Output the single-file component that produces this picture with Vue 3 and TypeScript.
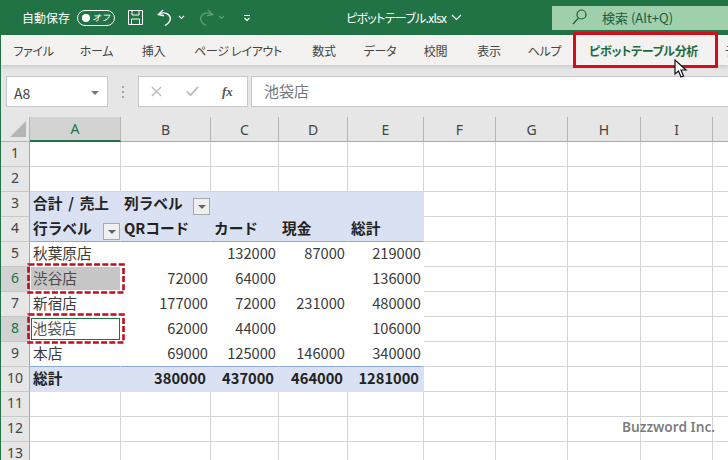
<script setup lang="ts">
const tabs = ['ファイル', 'ホーム', '挿入', 'ページ レイアウト', '数式', 'データ', '校閲', '表示', 'ヘルプ', 'ピボットテーブル分析', 'デザイン']
const cols = ['A', 'B', 'C', 'D', 'E', 'F', 'G', 'H', 'I', 'J']
const rowNums = Array.from({ length: 14 }, (_, i) => i + 1)

const data: Record<number, string[]> = {
  3: ['合計 / 売上', '列ラベル'],
  4: ['行ラベル', 'QRコード', 'カード', '現金', '総計'],
  5: ['秋葉原店', '', '132000', '87000', '219000'],
  6: ['渋谷店', '72000', '64000', '', '136000'],
  7: ['新宿店', '177000', '72000', '231000', '480000'],
  8: ['池袋店', '62000', '44000', '', '106000'],
  9: ['本店', '69000', '125000', '146000', '340000'],
  10: ['総計', '380000', '437000', '464000', '1281000'],
}

function text(r: number, c: number): string {
  return data[r]?.[c] ?? ''
}

function cellClass(r: number, c: number): Record<string, boolean> {
  const inPivot = r >= 3 && r <= 10 && c <= 4
  return {
    cell: true,
    pivot: inPivot,
    band: inPivot && (r === 3 || r === 4 || r === 10),
    bold: inPivot && (r === 3 || r === 4 || r === 10),
    lineb: inPivot && r === 4,
    lineb9: inPivot && r === 9,
    num: r >= 5 && r <= 10 && c >= 1 && c <= 4,
    total: r === 10 && c >= 1 && c <= 4,
    selected: r === 6 && c === 0,
    active: r === 8 && c === 0,
  }
}
</script>

<template>
  <div class="app">
    <header class="titlebar">
      <span class="autosave">自動保存</span>
      <span class="toggle"><i class="knob"></i><b>オフ</b></span>
      <svg class="save" width="17" height="17" viewBox="0 0 17 17" fill="none" stroke="#fff" stroke-width="1">
        <path d="M1.500 1.500h14v14h-14z" />
        <path d="M5 1.500v4.500h7v-4.500M4.500 15.500v-5.500h8v5.500" />
      </svg>
      <svg class="undo" width="16" height="17" viewBox="0 0 16 17" fill="none" stroke="#fff" stroke-width="1.400">
        <path d="M6 1L1.500 5.500L7 6.800" />
        <path d="M1.500 5.500c2.500-1.600 5.500-2 8-1 3.600 1.500 4.800 5 3 8-1 1.600-2.600 3-4.500 4" />
      </svg>
      <svg class="chev" width="7" height="5" viewBox="0 0 7 5" fill="none" stroke="#fff" stroke-width="1.200"><path d="M1 1l2.500 2.500L6 1" /></svg>
      <svg class="redo" width="16" height="17" viewBox="0 0 16 17" fill="none" stroke="#5f9d7c" stroke-width="1.400">
        <path d="M10 1L14.500 5.500L9 6.800" />
        <path d="M14.500 5.500c-2.500-1.600-5.500-2-8-1-3.600 1.500-4.800 5-3 8 1 1.600 2.600 3 4.500 4" />
      </svg>
      <svg class="chev dim" width="7" height="5" viewBox="0 0 7 5" fill="none" stroke="#5f9d7c" stroke-width="1.200"><path d="M1 1l2.500 2.500L6 1" /></svg>
      <svg class="more" width="8" height="8" viewBox="0 0 8 8" fill="none" stroke="#fff" stroke-width="1.200"><path d="M1 1.500h6M1.500 4l2.500 2.500L6.500 4" /></svg>
      <span class="doc">ピボットテーブル.xlsx</span>
      <svg class="docchev" width="11" height="7" viewBox="0 0 11 7" fill="none" stroke="#fff" stroke-width="1.200"><path d="M1 1l4.500 4.500L10 1" /></svg>
      <div class="search">
        <svg width="15" height="16" viewBox="0 0 15 16" fill="none" stroke="#1d5d3a" stroke-width="1.200"><circle cx="9.500" cy="5.500" r="4.500" /><path d="M6.500 9L1 15" /></svg>
        <span>検索 (Alt+Q)</span>
      </div>
    </header>

    <nav class="ribbon">
      <span v-for="t in tabs" :key="t" class="tab" :class="{ current: t === 'ピボットテーブル分析', tail: t === 'デザイン' }">{{ t }}</span>
    </nav>

    <section class="formula">
      <div class="namebox">
        <span>A8</span>
        <i class="caret"></i>
      </div>
      <div class="grip"><i></i><i></i><i></i></div>
      <div class="fbtns">
        <svg width="11" height="11" viewBox="0 0 12 12" stroke="#bdbdbd" stroke-width="1.600"><path d="M1 1l10 10M11 1L1 11" /></svg>
        <svg width="13" height="11" viewBox="0 0 14 12" fill="none" stroke="#bdbdbd" stroke-width="2"><path d="M1 6l4 4 8-9" /></svg>
        <span class="fx">fx</span>
      </div>
      <div class="finput">池袋店</div>
    </section>

    <section class="sheet">
      <div class="corner"><i></i></div>
      <div v-for="(c, i) in cols" :key="c" class="colhead" :class="{ on: i === 0 }">{{ c }}</div>
      <template v-for="r in rowNums" :key="r">
        <div class="rowhead" :class="{ on: r === 6 || r === 8 }"><span class="val">{{ r }}</span></div>
        <div v-for="(c, i) in cols" :key="c" :class="cellClass(r, i)">
          <span class="val">{{ text(r, i) }}</span>
          <i v-if="(r === 3 && i === 1) || (r === 4 && i === 0)" class="filter"></i>
        </div>
      </template>
      <svg class="dash d6" width="98" height="31" viewBox="0 0 98 31" fill="none"><rect x="1.500" y="1.500" width="95" height="28" stroke="#c00d1e" stroke-width="2.600" stroke-dasharray="6 2.200" /></svg>
      <svg class="dash d8" width="98" height="31" viewBox="0 0 98 31" fill="none"><rect x="1.500" y="1.500" width="95" height="28" stroke="#c00d1e" stroke-width="2.600" stroke-dasharray="6 2.200" /></svg>
    </section>

    <div class="tabmark"></div>
    <svg class="cursor" width="14" height="20" viewBox="0 0 14 20"><path d="M1 1v14l3.500-3 2.500 6 2.500-1-2.500-6H12z" fill="#fff" stroke="#111" stroke-width="1.200" /></svg>
    <div class="brand">Buzzword Inc.</div>
  </div>
</template>

<style>
html, body { margin: 0; overflow: hidden; }
</style>

<style scoped>
.app {
  position: relative;
  width: 728px;
  height: 460px;
  overflow: hidden;
  background: #fff;
  font-family: "Noto Sans CJK JP", "Noto Sans", sans-serif;
  border-left: 1px solid #217346;
  box-sizing: border-box;
}
.titlebar {
  display: flex;
  align-items: center;
  height: 35px;
  margin-left: -1px;
  background: #217346;
  color: #fff;
  padding-left: 22px;
  font-size: 12px;
}
.autosave { width: 55px; font-feature-settings: "palt"; }
.toggle {
  box-sizing: border-box;
  display: flex;
  align-items: center;
  justify-content: space-between;
  width: 38px;
  height: 16px;
  border: 1px solid #fff;
  border-radius: 8px;
  padding: 0 4px 0 4px;
}
.knob { width: 8px; height: 8px; border-radius: 50%; background: #fff; }
.toggle b { font-weight: 400; font-size: 9px; line-height: 14px; font-style: italic; }
.save { margin-left: 12px; }
.undo { margin-left: 13px; }
.chev { margin-left: 5px; }
.redo { margin-left: 13px; }
.chev.dim { margin-left: 4px; }
.more { margin-left: 18px; }
.doc { margin-left: 95px; font-size: 12px; letter-spacing: -0.700px; font-feature-settings: "palt"; }
.docchev { margin-left: 5px; }
.search {
  display: flex;
  align-items: center;
  gap: 15px;
  position: absolute;
  box-sizing: border-box;
  left: 551px;
  top: 6px;
  width: 176px;
  height: 24px;
  padding: 0 0 2px 20px;
  background: #a0cfae;
  color: #1d5d3a;
  font-size: 13px;
}
.ribbon {
  display: grid;
  grid-template-columns: 65px 61px 53px 116px 56px 56px 55px 52px 59px 139px auto;
  height: 30px;
  align-items: center;
  justify-items: center;
  background: #f3f2f1;
  white-space: nowrap;
  font-size: 12px;
  letter-spacing: -0.300px;
  color: #444;
  font-feature-settings: "palt";
  box-shadow: 0 2px 4px rgba(0, 0, 0, 0.12);
  position: relative;
}
.tab.current { font-weight: 700; color: #1d6b43; }
.tab.tail { justify-self: start; padding-left: 12px; }
.formula {
  display: flex;
  align-items: flex-start;
  height: 52px;
  box-sizing: border-box;
  background: #e6e6e6;
  padding: 11px 0 0 5px;
  border-bottom: 7px solid #e6e6e6;
}
.namebox {
  box-sizing: border-box;
  display: flex;
  align-items: center;
  justify-content: space-between;
  width: 102px;
  height: 31px;
  background: #fff;
  border: 1px solid #c8c8c8;
  padding: 2px 8px 0 7px;
  font-size: 14px;
  color: #444;
}
.caret {
  width: 0;
  height: 0;
  border-left: 4px solid transparent;
  border-right: 4px solid transparent;
  border-top: 4px solid #777;
}
.grip {
  display: flex;
  flex-direction: column;
  gap: 3px;
  width: 30px;
  align-items: center;
  padding-top: 10px;
}
.grip i { width: 2px; height: 2px; background: #a5a5a5; }
.fbtns {
  box-sizing: border-box;
  display: flex;
  align-items: center;
  gap: 24px;
  width: 110px;
  height: 31px;
  background: #fff;
  border: 1px solid #c8c8c8;
  padding-left: 12px;
}
.fx {
  font-family: "Liberation Serif", serif;
  font-style: italic;
  font-weight: 700;
  font-size: 13px;
  color: #555;
  margin-left: -1px;
}
.finput {
  box-sizing: border-box;
  flex: 1;
  height: 31px;
  margin-left: 3px;
  background: #fff;
  border: 1px solid #c8c8c8;
  border-right: 0;
  padding-left: 12px;
  font-size: 15px;
  line-height: 27px;
  color: #777;
}
.sheet {
  position: relative;
  display: grid;
  grid-template-columns: 29px 91px 90px 68px 69px 76px 72px 72px 73px 72px 72px;
  grid-auto-rows: 25px;
  font-size: 14.670px;
  color: #3a3a3a;
}
.corner {
  box-sizing: border-box;
  background: #e6e6e6;
  border-right: 1px solid #b5b5b5;
  border-bottom: 1px solid #b5b5b5;
  position: relative;
}
.corner i {
  position: absolute;
  left: 9px;
  top: 4px;
  border-style: solid;
  border-width: 0 0 16px 16px;
  border-color: transparent transparent #b5b5b5 transparent;
}
.colhead {
  box-sizing: border-box;
  display: flex;
  align-items: center;
  justify-content: center;
  background: #e6e6e6;
  border-right: 1px solid #b5b5b5;
  border-bottom: 1px solid #a8a8a8;
  color: #444;
  font-size: 14px;
  font-family: "Noto Sans", sans-serif;
}
.colhead.on {
  background: #d2d2d2;
  color: #217346;
  border-bottom: 2px solid #217346;
}
.rowhead {
  box-sizing: border-box;
  display: flex;
  align-items: center;
  justify-content: center;
  background: #e6e6e6;
  border-right: 1px solid #a8a8a8;
  border-bottom: 1px solid #c8c8c8;
  color: #444;
  font-size: 14px;
  font-family: "Noto Sans", sans-serif;
}
.rowhead.on { background: #d2d2d2; color: #217346; }
.cell {
  box-sizing: border-box;
  position: relative;
  display: flex;
  align-items: center;
  padding: 0 2px 0 3px;
  white-space: nowrap;
  border-right: 1px solid #d4d4d4;
  border-bottom: 1px solid #d4d4d4;
}
.val { position: relative; top: -1.500px; }
.cell.pivot { border-right-color: transparent; border-bottom-color: transparent; }
.cell.band { background: #d9e1f2; }
.cell.bold { font-weight: 700; color: #222; word-spacing: 2.500px; }
.cell.lineb, .cell.lineb9 { border-bottom-color: #8ea9db; }
.cell.num { justify-content: flex-end; }
.cell.total { padding-right: 4px; }
.cell.selected {
  background: #c6c6c6;
  border: 0;
  margin: 0 1px 2px 1px;
  padding-left: 2px;
  color: #4a4a4a;
}
.cell.active {
  border: 1.500px solid #217346;
  margin: 1px 1px 2px 1px;
  padding-left: 0.500px;
  color: #555;
  z-index: 1;
}
.filter {
  box-sizing: border-box;
  position: absolute;
  right: 0;
  top: 6px;
  width: 17px;
  height: 17px;
  background: #f0f0f0;
  border: 1px solid #a9a9a9;
}
.filter::after {
  content: "";
  position: absolute;
  left: 4px;
  top: 6px;
  border-left: 4px solid transparent;
  border-right: 4px solid transparent;
  border-top: 4px solid #666;
}
.dash { position: absolute; z-index: 2; left: 26px; }
.d6 { top: 146px; }
.d8 { top: 196px; }
.tabmark {
  position: absolute;
  box-sizing: border-box;
  left: 572px;
  top: 32px;
  width: 145px;
  height: 36px;
  border: 3px solid #d00f1c;
}
.cursor { position: absolute; left: 673px; top: 59px; }
.brand {
  position: absolute;
  left: 621px;
  top: 417px;
  font-family: "Noto Sans", sans-serif;
  font-weight: 600;
  font-size: 13.700px;
  color: rgba(100, 100, 100, 0.85);
}
</style>
